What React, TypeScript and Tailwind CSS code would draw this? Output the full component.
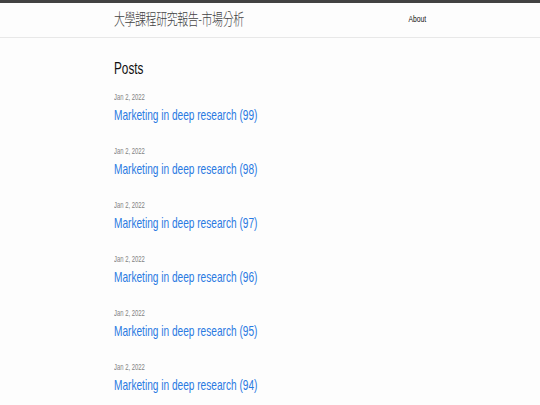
const posts = [99, 98, 97, 96, 95, 94];

function Squeeze({ children, right }: { children: React.ReactNode; right?: boolean }) {
  return (
    <span
      className={
        right
          ? "inline-block origin-right scale-x-[0.703] whitespace-nowrap"
          : "inline-block origin-left scale-x-[0.703] whitespace-nowrap"
      }
    >
      {children}
    </span>
  );
}

export default function App() {
  return (
    <div className="h-[405px] overflow-hidden bg-[#fdfdfd] text-[#111] font-['Liberation_Sans','Noto_Sans_CJK_TC',sans-serif]">
      <header className="border-t-[3px] border-b border-t-[#424242] border-b-[#e8e8e8] h-[38px]">
        <div className="mx-auto w-[312px] flex justify-between items-center h-[31px]">
          <a className="text-[15.6px] leading-[31px] font-light tracking-[-0.6px] text-[#424242] font-['Noto_Sans_CJK_TC',sans-serif]">
            <Squeeze>大學課程研究報告-市場分析</Squeeze>
          </a>
          <nav className="text-[9.6px] leading-[31px] text-[#111]">
            <Squeeze right>About</Squeeze>
          </nav>
        </div>
      </header>

      <main className="mx-auto w-[312px] pt-[18px]">
        <h2 className="text-[16.8px] leading-[25.2px] mb-[9px]">
          <Squeeze>Posts</Squeeze>
        </h2>
        <ul>
          {posts.map((n) => (
            <li key={n} className="mb-[18px]">
              <div className="h-[14.4px] leading-[14.4px] text-[8.4px] text-[#828282]">
                <Squeeze>Jan 2, 2022</Squeeze>
              </div>
              <h3 className="text-[14.4px] leading-[21.6px] text-[#2a7ae2]">
                <Squeeze>Marketing in deep research ({n})</Squeeze>
              </h3>
            </li>
          ))}
        </ul>
      </main>
    </div>
  );
}
